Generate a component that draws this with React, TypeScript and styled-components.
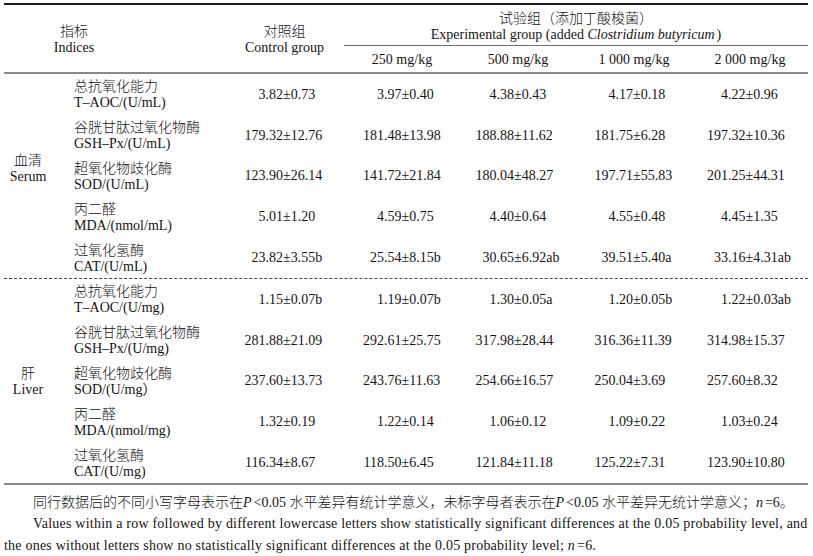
import React from "react";
import styled, { createGlobalStyle } from "styled-components";

const Global = createGlobalStyle`
  html, body { margin: 0; padding: 0; background: #ffffff; }
  body {
    font-family: "Liberation Serif", "Noto Sans CJK SC", serif;
    color: #141414;
    font-size: 14px;
  }
`;

const COLS = "48px 173px 119px 116px 116px 116px 116px";

const Page = styled.div`
  width: 804px;
  margin: 3px 0 0 4px;
`;

const Table = styled.div`
  border-top: 2px solid #1c1c1c;
  border-bottom: 2px solid #8a8a8a;
`;

const Head = styled.div`
  display: grid;
  grid-template-columns: ${COLS};
  grid-template-rows: 40px 1px 26px;
  border-bottom: 2px solid #8a8a8a;
`;

const HeadCell = styled.div<{ $col: string; $row: string; $padR?: number }>`
  grid-column: ${(p) => p.$col};
  grid-row: ${(p) => p.$row};
  display: flex;
  flex-direction: column;
  align-items: center;
  justify-content: center;
  line-height: 17px;
  padding-right: ${(p) => p.$padR ?? 0}px;
  text-align: center;
  white-space: nowrap;
`;

const TitleCell = styled(HeadCell)`
  padding-top: 2px;
`;

const HeadRule = styled.div`
  grid-column: 4 / 8;
  grid-row: 2;
  background: #6e6e6e;
`;

const Zh = styled.span`
  font-family: "Noto Sans CJK SC", sans-serif;
  font-weight: 300;
`;

const Section = styled.div<{ $dashed?: boolean }>`
  display: grid;
  grid-template-columns: ${COLS};
  grid-template-rows: repeat(5, 40.8px);
  border-bottom: ${(p) => (p.$dashed ? "1px dashed #444" : "none")};
`;

const GroupLabel = styled.div<{ $lift: number }>`
  grid-column: 1;
  grid-row: 1 / 6;
  display: flex;
  flex-direction: column;
  align-items: center;
  justify-content: center;
  line-height: 17px;
  padding-bottom: ${(p) => p.$lift}px;
`;

const IndexCell = styled.div`
  grid-column: 2;
  display: flex;
  flex-direction: column;
  justify-content: center;
  padding-left: 22px;
  line-height: 17px;
  white-space: nowrap;
`;

const ValueCell = styled.div<{ $left: number }>`
  display: grid;
  grid-template-columns: ${(p) => p.$left}px auto 1fr;
  align-items: center;
  white-space: nowrap;
  padding-top: 1px;
`;

const Mean = styled.span`
  text-align: right;
`;

const Note = styled.div`
  margin-top: 6px;
  font-size: 14px;
  line-height: 21.5px;
`;

const NotePara = styled.p<{ $track?: number }>`
  margin: 0;
  text-indent: 29px;
  letter-spacing: ${(p) => p.$track ?? 0}px;
`;

const I = styled.i`
  font-style: italic;
  padding-right: 2px;
`;

const PM_LEFT = [58, 57.5, 54, 57, 53.5];

type Row = { zh: string; en: string; v: string[] };

const serum: Row[] = [
  { zh: "总抗氧化能力", en: "T–AOC/(U/mL)", v: ["3.82±0.73", "3.97±0.40", "4.38±0.43", "4.17±0.18", "4.22±0.96"] },
  { zh: "谷胱甘肽过氧化物酶", en: "GSH–Px/(U/mL)", v: ["179.32±12.76", "181.48±13.98", "188.88±11.62", "181.75±6.28", "197.32±10.36"] },
  { zh: "超氧化物歧化酶", en: "SOD/(U/mL)", v: ["123.90±26.14", "141.72±21.84", "180.04±48.27", "197.71±55.83", "201.25±44.31"] },
  { zh: "丙二醛", en: "MDA/(nmol/mL)", v: ["5.01±1.20", "4.59±0.75", "4.40±0.64", "4.55±0.48", "4.45±1.35"] },
  { zh: "过氧化氢酶", en: "CAT/(U/mL)", v: ["23.82±3.55b", "25.54±8.15b", "30.65±6.92ab", "39.51±5.40a", "33.16±4.31ab"] },
];

const liver: Row[] = [
  { zh: "总抗氧化能力", en: "T–AOC/(U/mg)", v: ["1.15±0.07b", "1.19±0.07b", "1.30±0.05a", "1.20±0.05b", "1.22±0.03ab"] },
  { zh: "谷胱甘肽过氧化物酶", en: "GSH–Px/(U/mg)", v: ["281.88±21.09", "292.61±25.75", "317.98±28.44", "316.36±11.39", "314.98±15.37"] },
  { zh: "超氧化物歧化酶", en: "SOD/(U/mg）", v: ["237.60±13.73", "243.76±11.63", "254.66±16.57", "250.04±3.69", "257.60±8.32"] },
  { zh: "丙二醛", en: "MDA/(nmol/mg)", v: ["1.32±0.19", "1.22±0.14", "1.06±0.12", "1.09±0.22", "1.03±0.24"] },
  { zh: "过氧化氢酶", en: "CAT/(U/mg)", v: ["116.34±8.67", "118.50±6.45", "121.84±11.18", "125.22±7.31", "123.90±10.80"] },
];

function Value({ text, left }: { text: string; left: number }) {
  const [a, b] = text.split("±");
  return (
    <ValueCell $left={left}>
      <Mean>{a}</Mean>
      <span>±</span>
      <span>{b}</span>
    </ValueCell>
  );
}

function Block({ zh, en, rows, lift, dashed }: { zh: string; en: string; rows: Row[]; lift: number; dashed?: boolean }) {
  return (
    <Section $dashed={dashed}>
      <GroupLabel $lift={lift}>
        <Zh>{zh}</Zh>
        <span>{en}</span>
      </GroupLabel>
      {rows.map((r) => (
        <React.Fragment key={r.en}>
          <IndexCell>
            <Zh>{r.zh}</Zh>
            <span>{r.en}</span>
          </IndexCell>
          {r.v.map((v, i) => (
            <Value key={i} text={v} left={PM_LEFT[i]} />
          ))}
        </React.Fragment>
      ))}
    </Section>
  );
}

export default function App() {
  return (
    <>
      <Global />
      <Page>
        <Table>
          <Head>
            <HeadCell $col="1 / 3" $row="1 / 4" $padR={81}>
              <Zh>指标</Zh>
              <span>Indices</span>
            </HeadCell>
            <HeadCell $col="3" $row="1 / 4">
              <Zh>对照组</Zh>
              <span>Control group</span>
            </HeadCell>
            <TitleCell $col="4 / 8" $row="1">
              <Zh>试验组（添加丁酸梭菌）</Zh>
              <span>
                Experimental group (added <I>Clostridium butyricum</I>)
              </span>
            </TitleCell>
            <HeadRule />
            <HeadCell $col="4" $row="3">250 mg/kg</HeadCell>
            <HeadCell $col="5" $row="3">500 mg/kg</HeadCell>
            <HeadCell $col="6" $row="3">1 000 mg/kg</HeadCell>
            <HeadCell $col="7" $row="3">2 000 mg/kg</HeadCell>
          </Head>
          <Block zh="血清" en="Serum" rows={serum} lift={15} dashed />
          <Block zh="肝" en="Liver" rows={liver} lift={0} />
        </Table>
        <Note>
          <NotePara>
            <Zh>同行数据后的不同小写字母表示在</Zh>
            <I>P</I>&lt;0.05 <Zh>水平差异有统计学意义，未标字母者表示在</Zh>
            <I>P</I>&lt;0.05 <Zh>水平差异无统计学意义；</Zh>
            <I>n</I>=6<Zh>。</Zh>
          </NotePara>
          <NotePara $track={0.22}>
            Values within a row followed by different lowercase letters show statistically significant differences at
            the 0.05 probability level, and the ones without letters show no statistically significant differences at
            the 0.05 probability level; <I>n</I>=6.
          </NotePara>
        </Note>
      </Page>
    </>
  );
}
